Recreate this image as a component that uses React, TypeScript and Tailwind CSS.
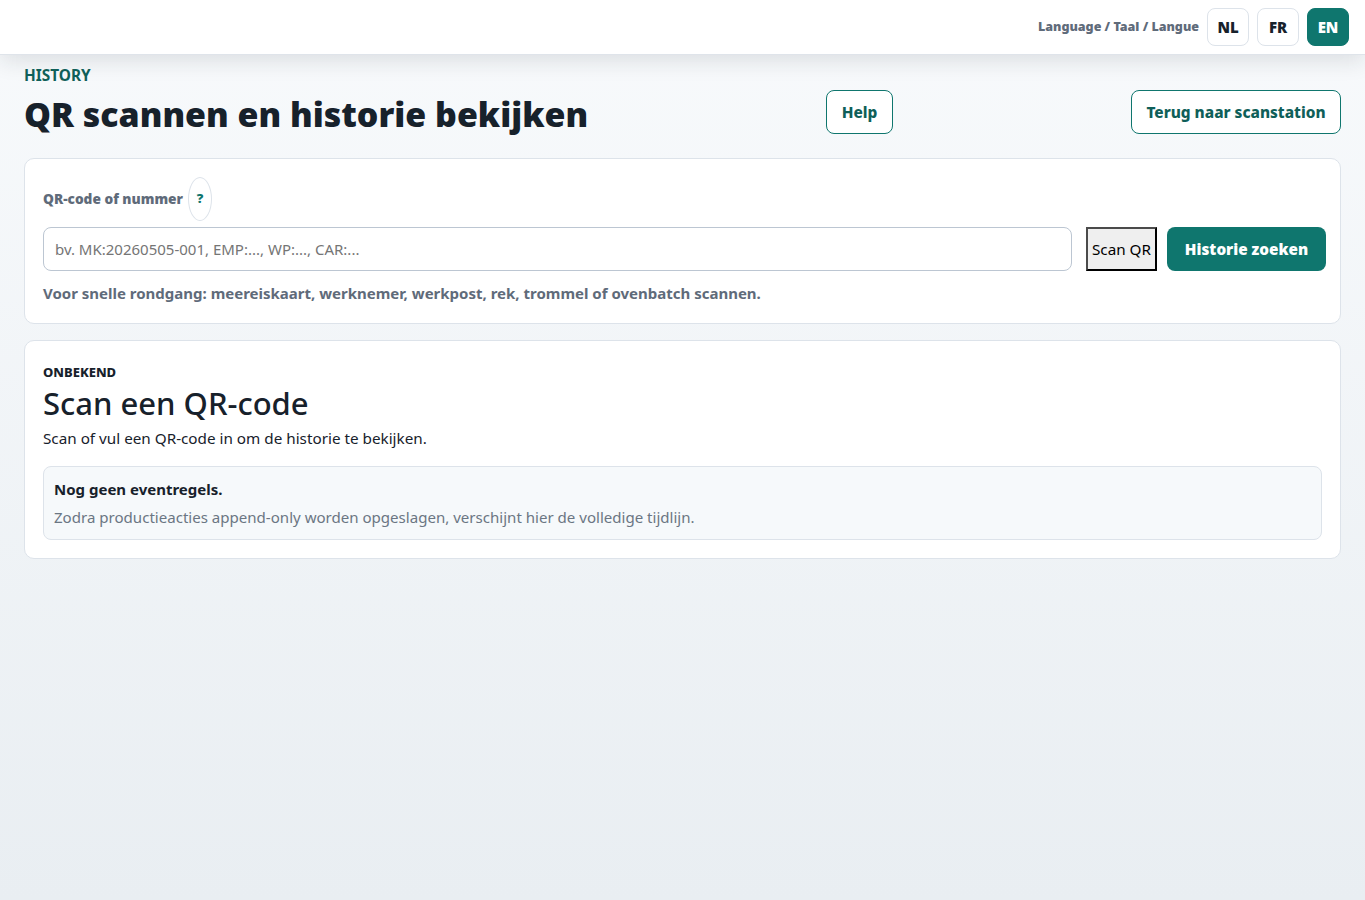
import React from "react";

const font = "font-['Noto_Sans',sans-serif]";

const LangButton = ({ label, active }: { label: string; active?: boolean }) => (
  <button
    className={
      active
        ? "h-[38px] w-[42px] rounded-lg border border-[#0f766e] bg-[#0f766e] text-[15px] font-black text-white"
        : "h-[38px] w-[42px] rounded-lg border border-[#dde3ea] bg-white text-[15px] font-black text-[#17212b]"
    }
  >
    {label}
  </button>
);

export default function App() {
  return (
    <div className={`${font} min-h-[900px] bg-gradient-to-b from-[#f8fafc] to-[#e9eef2] text-[#17212b]`}>
      <header className="flex h-[55px] items-center justify-end gap-2 border-b border-[#dfe4ea] bg-white px-4 shadow-[0_6px_22px_rgba(23,33,43,0.12)]">
        <span className="text-[12.5px] font-black text-[#5f6b7a]">Language / Taal / Langue</span>
        <LangButton label="NL" />
        <LangButton label="FR" />
        <LangButton label="EN" active />
      </header>

      <main className="px-6 pt-[11px]">
        <div className="mb-[21px] flex items-end justify-between">
          <div>
            <div className="text-[15.4px] leading-[20px] font-bold text-[#0f5f59]">HISTORY</div>
            <h1 className="mt-[5px] text-[33.9px] leading-[46px] font-black">QR scannen en historie bekijken</h1>
          </div>
          <button className="mb-[3px] h-11 w-[67px] rounded-lg border border-[#0f766e] bg-white pt-[1px] text-[15.4px] font-extrabold text-[#0f5f59]">
            Help
          </button>
          <button className="mb-[3px] h-11 w-[210px] rounded-lg border border-[#0f766e] bg-white pt-[1px] text-[15.4px] font-extrabold text-[#0f5f59]">
            Terug naar scanstation
          </button>
        </div>

        <section className="rounded-[10px] border border-[#dde3ea] bg-white px-[18px] pt-[18px] pb-[20px]">
          <div className="flex h-11 items-center">
            <label className="text-[13.7px] font-black text-[#5f6b7a]">QR-code of nummer</label>
            <button className="ml-[5px] h-11 w-6 rounded-[50%] border border-[#dde3ea] bg-white text-[13px] font-black text-[#0f766e]">
              ?
            </button>
          </div>
          <div className="-mr-1 mt-[6px] flex items-center">
            <input
              placeholder="bv. MK:20260505-001, EMP:..., WP:..., CAR:..."
              className="h-11 flex-1 rounded-lg border border-[#bcc6d2] bg-white px-[11px] text-[15px] placeholder:text-[#757575] outline-none"
            />
            <button className="ml-[14px] h-11 w-[71px] border-2 border-t-[#4b4b4b] border-r-black border-b-black border-l-[#4b4b4b] bg-[#efefef] text-[15.25px] text-black">
              Scan QR
            </button>
            <button className="ml-[10px] h-11 w-[159px] rounded-lg bg-[#0f766e] text-[15.25px] font-black text-white">
              Historie zoeken
            </button>
          </div>
          <p className="mt-3 text-[15px] leading-[20px] font-bold text-[#5f6b7a]">
            Voor snelle rondgang: meereiskaart, werknemer, werkpost, rek, trommel of ovenbatch scannen.
          </p>
        </section>

        <section className="mt-4 rounded-[10px] border border-[#dde3ea] bg-white p-[18px]">
          <div className="mt-[3px] text-[13px] leading-[20px] font-extrabold text-[#17212b]">ONBEKEND</div>
          <h2 className="text-[31px] leading-[42px] font-medium">Scan een QR-code</h2>
          <p className="mt-[4px] text-[15.25px] leading-[20px]">Scan of vul een QR-code in om de historie te bekijken.</p>
          <div className="mt-[18px] rounded-lg border border-[#dde3ea] bg-[#f6f9fb] px-[10px] py-[9px]">
            <div className="text-[15px] leading-[26px] font-bold">Nog geen eventregels.</div>
            <div className="mt-[2px] text-[15.07px] leading-[26px] text-[#6b7683]">
              Zodra productieacties append-only worden opgeslagen, verschijnt hier de volledige tijdlijn.
            </div>
          </div>
        </section>
      </main>
    </div>
  );
}
